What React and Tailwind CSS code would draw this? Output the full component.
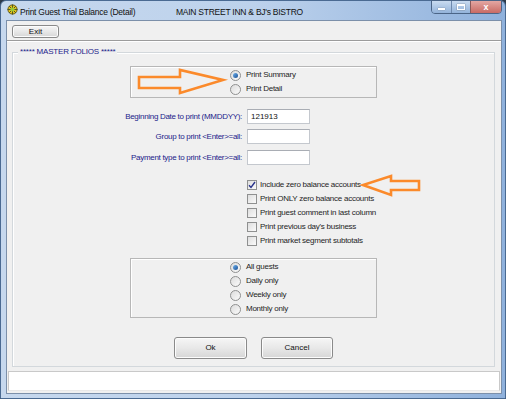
const font = { fontFamily: '"Liberation Sans", Arial, sans-serif' };

function Radio({ checked, label }) {
  return (
    <div className="flex h-[14px] items-center">
      <span className="flex h-[11px] w-[11px] items-center justify-center rounded-full border border-[#8f9090] bg-gradient-to-br from-[#dcdcdc] to-[#fbfbfb]">
        {checked && (
          <span className="h-[5px] w-[5px] rounded-full bg-gradient-to-br from-[#6fb2ee] to-[#1a4f93]" />
        )}
      </span>
      <span className="ml-[5px] whitespace-nowrap text-[8px] tracking-[-0.25px] text-[#1e1e1e]">{label}</span>
    </div>
  );
}

function Check({ checked, label }) {
  return (
    <div className="flex h-[14px] items-center">
      <span className="flex h-[10px] w-[10px] items-center justify-center border border-[#8f9090] bg-gradient-to-br from-[#dedede] to-[#fafafa]">
        {checked && (
          <svg width="8" height="8" viewBox="0 0 8 8">
            <path d="M1 4.2 L3 6.4 L7 1" fill="none" stroke="#27318a" strokeWidth="1.4" />
          </svg>
        )}
      </span>
      <span className="ml-[3px] whitespace-nowrap text-[8px] tracking-[-0.25px] text-[#1e1e1e]">{label}</span>
    </div>
  );
}

function Field({ label, value, className }) {
  return (
    <div className={`flex h-[15px] items-center ${className}`}>
      <span className="flex w-[112px] justify-end whitespace-nowrap text-[8px] tracking-[-0.3px] text-[#23238a]">{label}</span>
      <span className="ml-[5px] flex h-[15px] w-[63px] items-center border border-[#c4c8ce] border-t-[#a9adb4] bg-white pl-[3px] text-[8px] text-[#111]">
        {value}
      </span>
    </div>
  );
}

function Btn({ children, className }) {
  return (
    <button className={`flex items-center justify-center rounded-[3px] border border-[#8a8a8a] bg-gradient-to-b from-[#f6f6f6] via-[#e8e8e8] to-[#d6d6d6] text-[8px] text-[#111] shadow-[inset_0_0_0_1px_#fcfcfc] ${className}`}>
      {children}
    </button>
  );
}

export default function App() {
  return (
    <div style={font} className="relative h-[399px] w-[506px] overflow-hidden bg-[#2d3a4a]">
      <div className="flex h-[399px] w-[506px] flex-col rounded-t-[6px] border border-[#4a6a92] bg-gradient-to-r from-[#c6d8ee] via-[#bdd2ec] to-[#8fb1dc]">
        {/* title bar */}
        <div className="flex h-[19px] items-start">
          <svg className="ml-[6px] mt-[3px]" width="11" height="11" viewBox="0 0 11 11">
            <circle cx="5.5" cy="5.5" r="4.6" fill="#e3c21c" stroke="#6b5a10" strokeWidth="1" />
            <path d="M5.5 0.5 V10.5 M0.5 5.5 H10.5 M2 2 L9 9 M9 2 L2 9" stroke="#4f5a22" strokeWidth="1" />
            <circle cx="5.5" cy="5.5" r="2" fill="#9acb3a" />
          </svg>
          <span className="ml-[2px] mt-[5px] w-[156px] whitespace-nowrap text-[8.5px] tracking-[-0.25px] text-[#111]">
            Print Guest Trial Balance (Detail)
          </span>
          <span className="mt-[5px] whitespace-nowrap text-[8.5px] tracking-[-0.25px] text-[#111]">MAIN STREET INN &amp; BJ's BISTRO</span>
          <div className="ml-auto mr-[3px] flex h-[14px] -mt-[1px] overflow-hidden rounded-b-[4px] border border-[#4b6587]">
            <span className="flex w-[19px] items-end justify-center bg-gradient-to-b from-[#c9dbf0] to-[#93b3da] pb-[3px]">
              <span className="h-[2px] w-[7px] bg-white shadow-[0_0_1px_#333]" />
            </span>
            <span className="flex w-[19px] items-center justify-center border-l border-[#6e89ad] bg-gradient-to-b from-[#c9dbf0] to-[#93b3da]">
              <span className="h-[6px] w-[8px] border border-white border-t-2 shadow-[0_0_1px_#555]" />
            </span>
            <span className="flex w-[31px] items-center justify-center border-l border-[#8a5a5a] bg-gradient-to-b from-[#e3a7a3] to-[#c86a64] text-[9px] font-bold leading-none text-white">
              x
            </span>
          </div>
        </div>

        {/* client */}
        <div className="ml-[5px] mr-[3px] flex h-[374px] flex-col border border-[#7c90aa] bg-[#f0f0f0]">
          <div className="h-[19px] pl-[5px] pt-[4px]">
            <Btn className="h-[13px] w-[47px]">Exit</Btn>
          </div>
          <div className="h-[2px] border-t border-[#9c9c9c] border-b border-b-white" />

          <div className="relative ml-[5px] mt-[10px] w-[483px] border border-[#d3d8dc] pb-[7px] pl-[117px] shadow-[inset_1px_1px_0_#fff]">
            <span className="absolute -top-[6px] left-[5px] whitespace-nowrap bg-[#f0f0f0] px-[2px] text-[8px] leading-[10px] tracking-[-0.2px] text-[#23238a]">
              ***** MASTER FOLIOS *****
            </span>

            <div className="mt-[13px] h-[32px] w-[247px] border border-[#b7b7b7] pl-[99px] pt-[1px] shadow-[inset_1px_1px_0_#fff]">
              <Radio checked label="Print Summary" />
              <Radio label="Print Detail" />
            </div>

            <Field className="mt-[11px]" label="Beginning Date to print (MMDDYY):" value="121913" />
            <Field className="mt-[5px]" label="Group to print <Enter>=all:" value="" />
            <Field className="mt-[6px]" label="Payment type to print <Enter>=all:" value="" />

            <div className="mt-[13px] pl-[117px]">
              <Check checked label="Include zero balance accounts" />
              <Check label="Print ONLY zero balance accounts" />
              <Check label="Print guest comment in last column" />
              <Check label="Print previous day's business" />
              <Check label="Print market segment subtotals" />
            </div>

            <div className="mt-[10px] h-[60px] w-[247px] border border-[#b7b7b7] pl-[99px] pt-[1px] shadow-[inset_1px_1px_0_#fff]">
              <Radio checked label="All guests" />
              <Radio label="Daily only" />
              <Radio label="Weekly only" />
              <Radio label="Monthly only" />
            </div>

            <div className="mt-[19px] flex pl-[44px]">
              <Btn className="h-[22px] w-[73px]">Ok</Btn>
              <Btn className="ml-[14px] h-[22px] w-[72px]">Cancel</Btn>
            </div>
          </div>

          <div className="ml-[1px] mt-[4px] h-[20px] w-[492px] border border-[#c9c9c9] border-b-[#e8e8e8] bg-white" />
        </div>
      </div>

      {/* orange annotation arrows */}
      <svg className="pointer-events-none absolute left-0 top-0" width="506" height="399">
        <path
          d="M139 77 L180 77 L180 70 L223 80 L180 93 L180 88 L139 88 Z"
          fill="none"
          stroke="#fb8a2b"
          strokeWidth="2.6"
          strokeLinejoin="miter"
        />
        <path
          d="M419 181 L391 181 L391 176 L363 185 L391 195 L391 190 L419 190 Z"
          fill="none"
          stroke="#fb8a2b"
          strokeWidth="2.6"
        />
      </svg>
    </div>
  );
}
